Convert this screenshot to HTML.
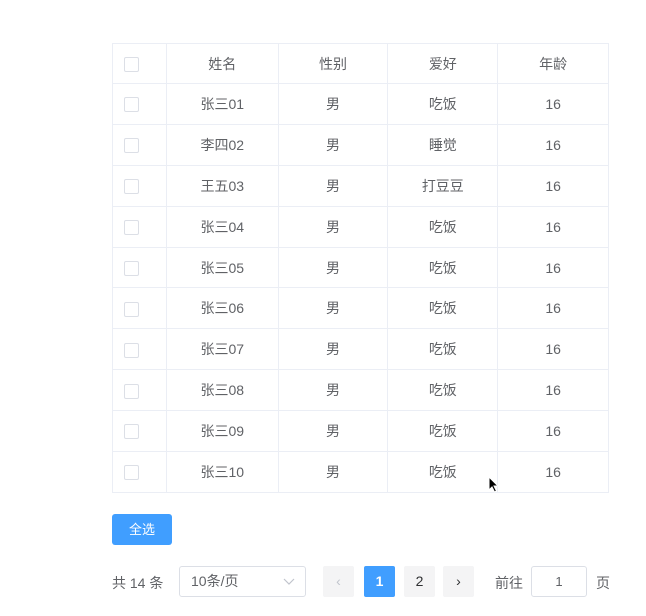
<!DOCTYPE html><html><head><meta charset="utf-8"><style>
body{margin:0;width:646px;height:616px;background:#fff;font-family:"Liberation Sans","Noto Sans CJK SC",sans-serif;font-size:14px;color:#606266;position:relative;overflow:hidden}
table{position:absolute;left:112px;top:43px;border-collapse:collapse;width:497px}
td{border:1px solid #ebeef5;height:39.9px;text-align:center;padding:0}
td:first-child{text-align:left;padding-left:11px}
tr:first-child td{color:#606266;height:39px}
.cb{display:inline-block;width:13px;height:13px;border:1px solid #dcdfe6;border-radius:2px;background:#fff;vertical-align:middle}
.abs{position:absolute}
.btn{left:112px;top:514px;width:60px;height:31px;background:#409eff;color:#fff;border-radius:3px;text-align:center;line-height:31px;font-size:13px}
.pg{top:566px;width:31px;height:31px;border-radius:2px;background:#f4f4f5;text-align:center;line-height:31px;font-size:14px;color:#303133}
</style></head><body>
<table>
<colgroup><col style="width:54px"><col style="width:112px"><col style="width:110px"><col style="width:110px"><col style="width:111px"></colgroup>
<tr><td><span class="cb"></span></td><td>姓名</td><td>性别</td><td>爱好</td><td>年龄</td></tr>
<tr><td><span class="cb"></span></td><td>张三01</td><td>男</td><td>吃饭</td><td>16</td></tr>
<tr><td><span class="cb"></span></td><td>李四02</td><td>男</td><td>睡觉</td><td>16</td></tr>
<tr><td><span class="cb"></span></td><td>王五03</td><td>男</td><td>打豆豆</td><td>16</td></tr>
<tr><td><span class="cb"></span></td><td>张三04</td><td>男</td><td>吃饭</td><td>16</td></tr>
<tr><td><span class="cb"></span></td><td>张三05</td><td>男</td><td>吃饭</td><td>16</td></tr>
<tr><td><span class="cb"></span></td><td>张三06</td><td>男</td><td>吃饭</td><td>16</td></tr>
<tr><td><span class="cb"></span></td><td>张三07</td><td>男</td><td>吃饭</td><td>16</td></tr>
<tr><td><span class="cb"></span></td><td>张三08</td><td>男</td><td>吃饭</td><td>16</td></tr>
<tr><td><span class="cb"></span></td><td>张三09</td><td>男</td><td>吃饭</td><td>16</td></tr>
<tr><td><span class="cb"></span></td><td>张三10</td><td>男</td><td>吃饭</td><td>16</td></tr>
</table>
<svg class="abs" style="left:488px;top:476px" width="12" height="18" viewBox="0 0 12 18"><path d="M1 1 L1 14 L4 11 L6.5 16 L8.5 15 L6 10 L10 10 Z" fill="#000" stroke="#fff" stroke-width="1"/></svg>
<div class="abs btn">全选</div>
<div class="abs" style="left:112px;top:573px;font-size:14px">共 14 条</div>
<div class="abs" style="left:179px;top:566px;width:125px;height:29px;border:1px solid #dcdfe6;border-radius:3px;line-height:29px">
<span style="position:absolute;left:11px">10条/页</span>
<svg style="position:absolute;right:10px;top:11px" width="12" height="8" viewBox="0 0 12 8"><path d="M1 1l5 5 5-5" fill="none" stroke="#c0c4cc" stroke-width="1.2"/></svg></div>
<div class="abs pg" style="left:323px;color:#c0c4cc">‹</div>
<div class="abs pg" style="left:364px;background:#409eff;color:#fff;font-weight:bold">1</div>
<div class="abs pg" style="left:404px">2</div>
<div class="abs pg" style="left:443px">›</div>
<div class="abs" style="left:495px;top:573px">前往</div>
<div class="abs" style="left:531px;top:566px;width:54px;height:29px;border:1px solid #dcdfe6;border-radius:3px;text-align:center;line-height:29px;font-size:13px">1</div>
<div class="abs" style="left:596px;top:573px">页</div>
</body></html>
